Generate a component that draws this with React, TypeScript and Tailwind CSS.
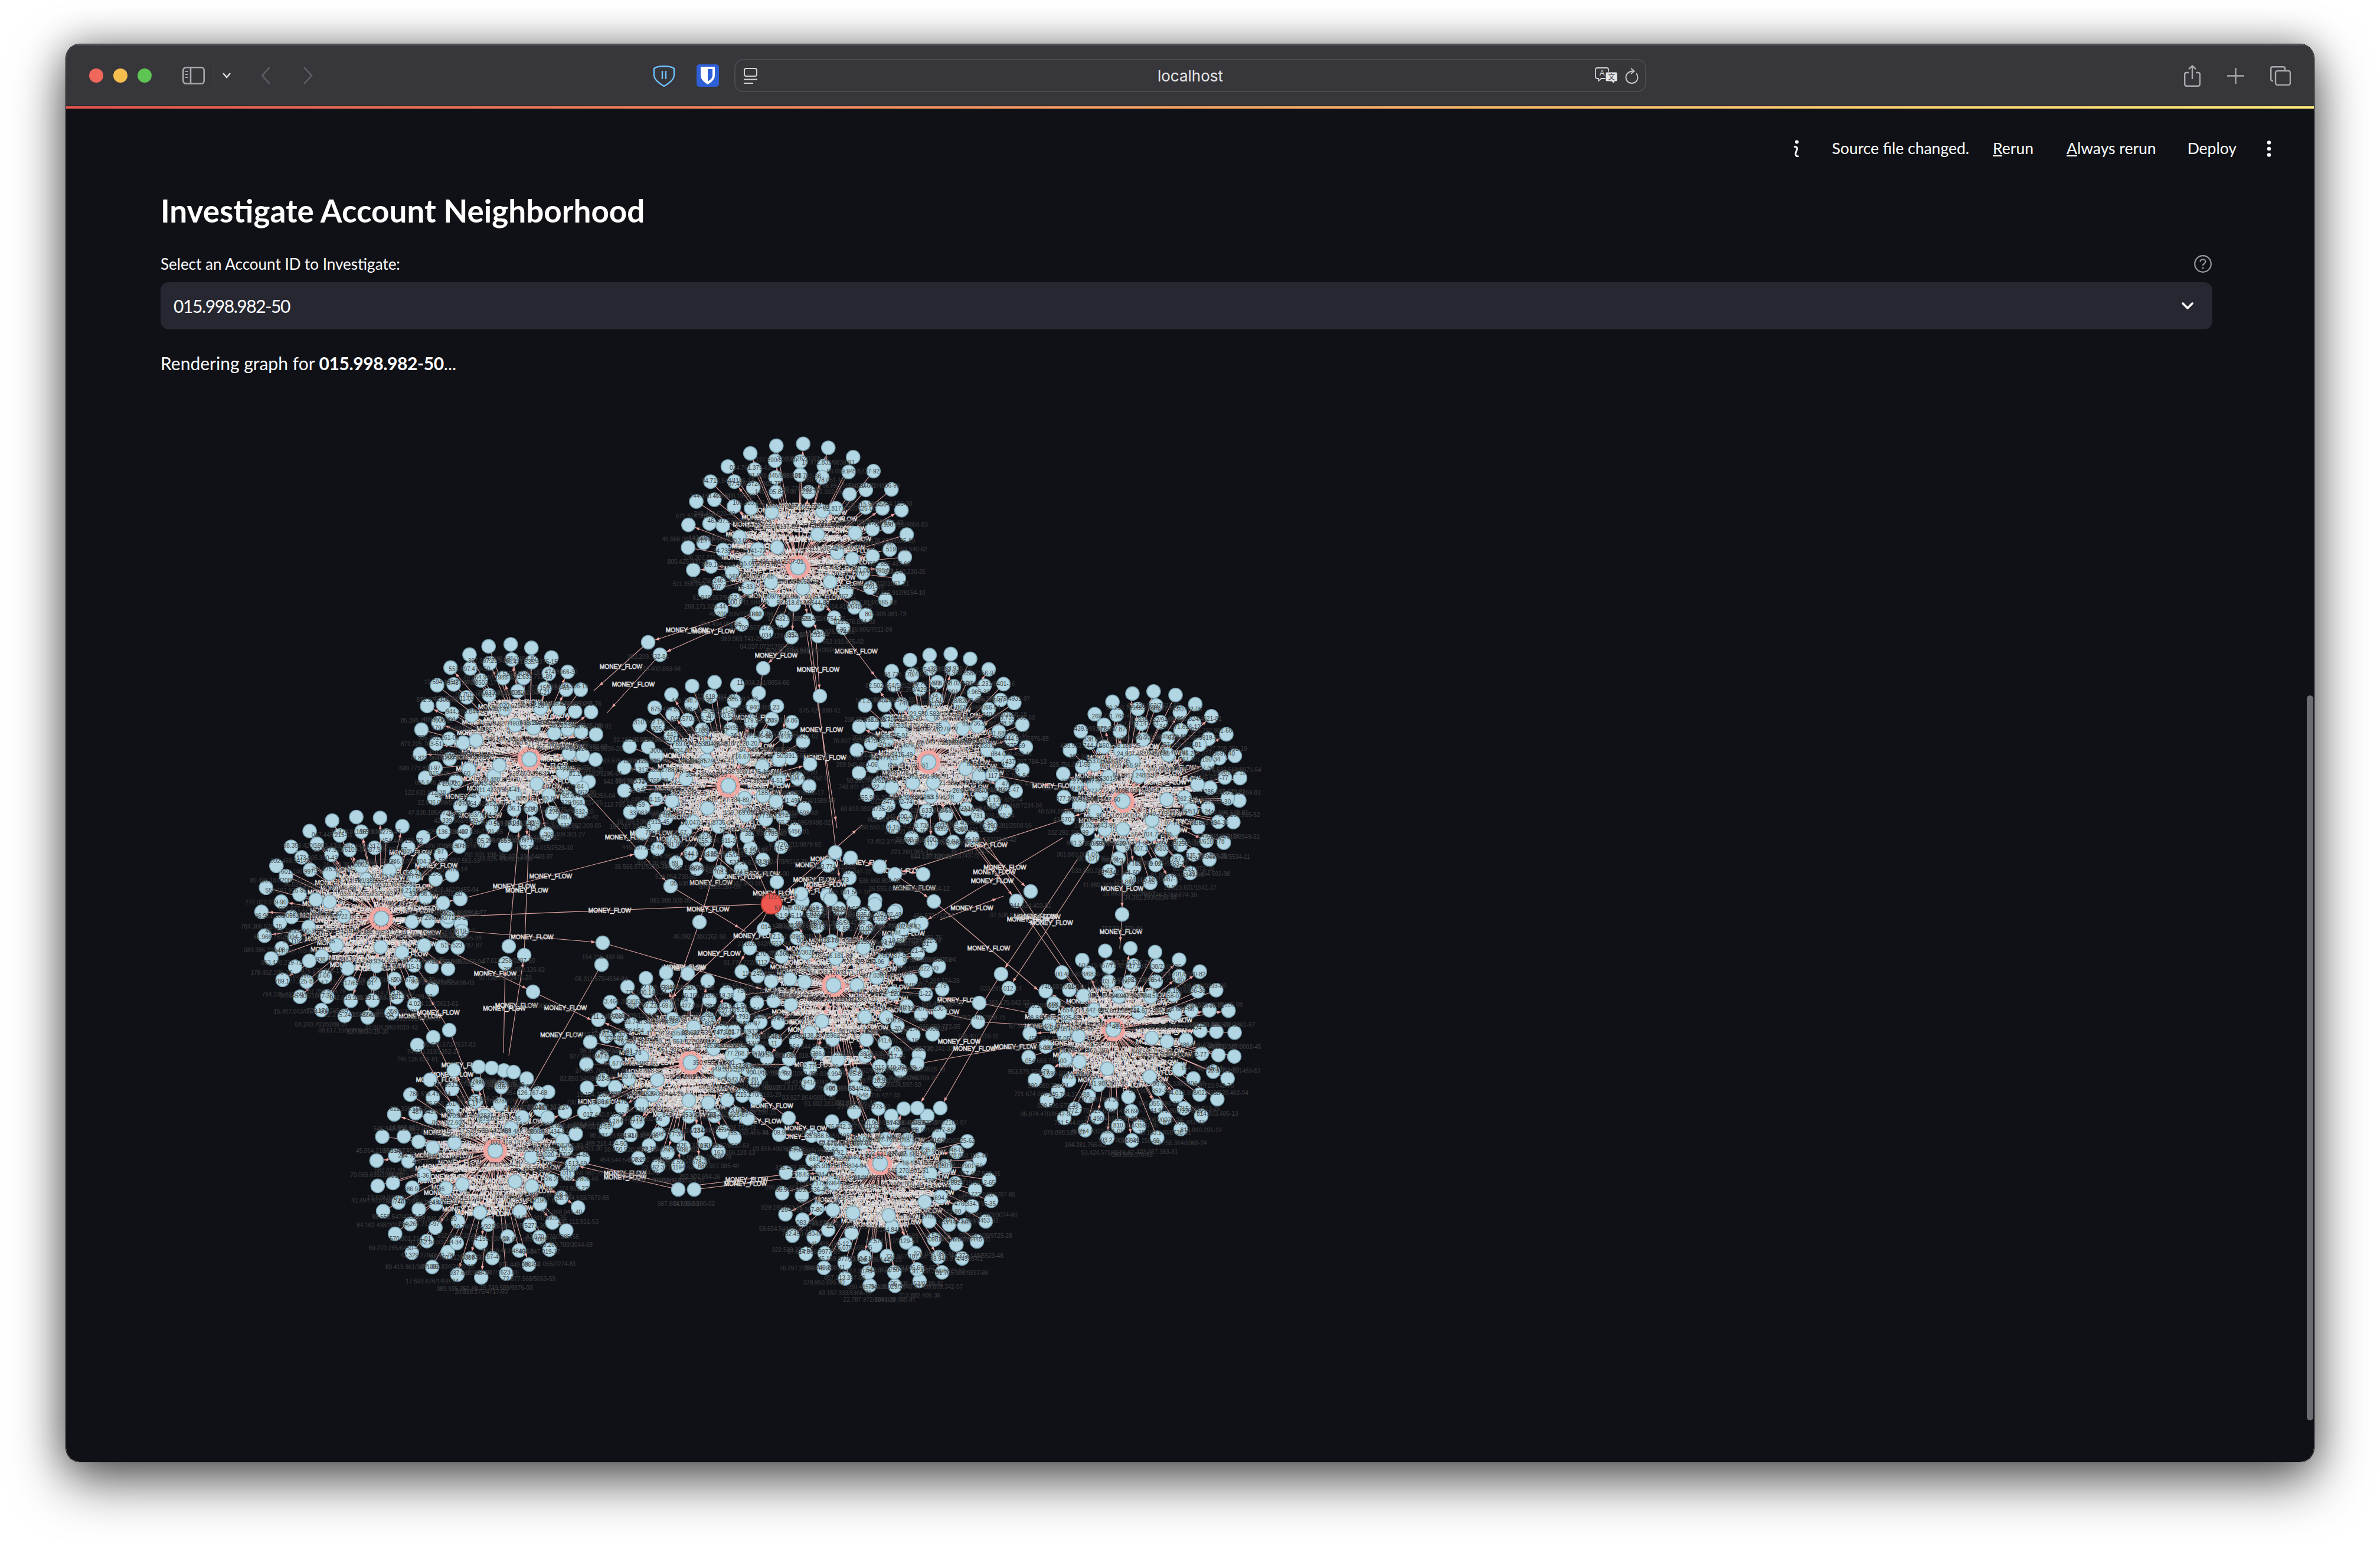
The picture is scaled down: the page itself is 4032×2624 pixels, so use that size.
import React from "react";

// --- graph data ---------------------------------------------------------

type Cluster = { hx: number; hy: number; cx: number; cy: number; rx: number; ry: number };

const clusters: Cluster[] = [
  { hx: 1352, hy: 963, cx: 1351, cy: 918, rx: 186, ry: 163 },
  { hx: 897, hy: 1288, cx: 860, cy: 1263, rx: 149, ry: 169 },
  { hx: 1234, hy: 1333, cx: 1215, cy: 1319, rx: 158, ry: 160 },
  { hx: 1573, hy: 1293, cx: 1594, cy: 1270, rx: 143, ry: 161 },
  { hx: 1902, hy: 1359, cx: 1951, cy: 1335, rx: 150, ry: 162 },
  { hx: 646, hy: 1558, cx: 613, cy: 1556, rx: 169, ry: 171 },
  { hx: 1412, hy: 1671, cx: 1425, cy: 1682, rx: 172, ry: 165 },
  { hx: 1886, hy: 1746, cx: 1917, cy: 1772, rx: 175, ry: 163 },
  { hx: 1170, hy: 1802, cx: 1140, cy: 1814, rx: 147, ry: 164 },
  { hx: 839, hy: 1951, cx: 813, cy: 1988, rx: 176, ry: 178 },
  { hx: 1491, hy: 1973, cx: 1502, cy: 2030, rx: 176, ry: 151 },
];

const rings = [
  { f: 1, n: 26 },
  { f: 0.84, n: 23 },
  { f: 0.68, n: 18 },
  { f: 0.52, n: 11 },
  { f: 0.36, n: 5 },
  { f: 0.2, n: 2 },
];

// nodes that sit between the clusters
const looseNodes: [number, number][] = [
  [1293, 1134], [1389, 1181], [1415, 1446], [1441, 1455], [1403, 1468], [1490, 1470], [1516, 1483], [1564, 1483],
  [1439, 1489], [1316, 1496], [1357, 1516], [1407, 1525], [1446, 1530], [1482, 1534], [1515, 1547], [1349, 1546],
  [1383, 1542], [1582, 1529], [1561, 1566], [1529, 1576], [1746, 1512], [1722, 1528], [1901, 1551], [1576, 1604],
  [1696, 1652], [1709, 1676], [1659, 1701], [1657, 1733], [1554, 1804], [1515, 1804], [1554, 1879], [1593, 1879],
  [1510, 1892], [1432, 1915], [1336, 1896], [1320, 1924], [1394, 1930], [1464, 1853], [1019, 1636], [903, 1682],
  [761, 1747], [734, 1759], [707, 1772], [1149, 2017], [1176, 2017], [990, 1886], [1249, 1806], [1279, 1832],
  [833, 1811], [870, 1818], [912, 1854], [928, 1895], [953, 1934], [969, 1975], [1098, 1090], [1118, 1111],
  [751, 1411], [778, 1436], [780, 1525], [759, 1555], [782, 1579], [1021, 1599], [862, 1605], [888, 1620],
  [856, 1634], [1136, 1503], [1185, 1564], [1086, 1446], [986, 1337], [984, 1376],
];

// long edges: x1, y1, x2, y2 (arrow at the second end)
const looseEdges: number[][] = [
  [1307, 1533, 759, 1555], [780, 1525, 1086, 1446], [782, 1579, 1021, 1599], [1021, 1599, 1300, 1680],
  [1136, 1503, 1263, 1580], [986, 1337, 1136, 1503], [1185, 1564, 1224, 1430], [862, 1605, 880, 1400],
  [888, 1620, 897, 1400], [1230, 1047, 1098, 1090], [1098, 1090, 1006, 1172], [1118, 1111, 1028, 1210],
  [1300, 1030, 1118, 1111], [1366, 1070, 1418, 1405], [1372, 1070, 1423, 1500], [1383, 1090, 1389, 1181],
  [1337, 1090, 1293, 1134], [1293, 1134, 1270, 1300], [1412, 1054, 1489, 1156], [1647, 1430, 1722, 1528],
  [1659, 1430, 1746, 1512], [1653, 1430, 1831, 1687], [1665, 1421, 1843, 1687], [1825, 1383, 1516, 1483],
  [1801, 1421, 1561, 1566], [1854, 1454, 1709, 1676], [1825, 1458, 1696, 1652], [1901, 1462, 1901, 1551],
  [1901, 1551, 1897, 1609], [1582, 1529, 1768, 1687], [1814, 1336, 1756, 1329], [1756, 1329, 1573, 1293],
  [1802, 1374, 1902, 1359], [1696, 1652, 1554, 1879], [1709, 1676, 1593, 1879], [1659, 1701, 1886, 1746],
  [1659, 1701, 1589, 1691], [1657, 1733, 1886, 1746], [1657, 1733, 1521, 1699], [1554, 1804, 1886, 1746],
  [1515, 1804, 1249, 1806], [1249, 1806, 1170, 1802], [1279, 1832, 1170, 1802], [1149, 2017, 969, 1975],
  [1146, 2010, 972, 1968], [1176, 2017, 1350, 1996], [1178, 2010, 1352, 1989], [903, 1682, 1013, 1735],
  [775, 1620, 903, 1682], [1019, 1636, 884, 1873], [707, 1772, 775, 1889], [734, 1759, 689, 1687],
  [734, 1759, 798, 1885], [761, 1747, 724, 1687], [761, 1747, 807, 1865], [853, 1786, 856, 1634],
  [862, 1790, 888, 1620], [1307, 1533, 1316, 1496], [1307, 1533, 1439, 1489], [1307, 1533, 1357, 1516],
  [1307, 1533, 1263, 1430], [1307, 1533, 1200, 1440], [1307, 1533, 1130, 1700], [1307, 1533, 1349, 1546],
  [1307, 1533, 1460, 1400], [1403, 1468, 1357, 1516], [1439, 1489, 1357, 1510], [1490, 1470, 1564, 1483],
  [1516, 1483, 1582, 1529], [1441, 1455, 1490, 1470], [1415, 1446, 1403, 1468], [1335, 1896, 1280, 1853],
  [1320, 1924, 1257, 1877], [1394, 1930, 1336, 1896], [1394, 1930, 1320, 1924], [990, 1886, 839, 1951],
  [990, 1886, 1040, 1850], [751, 1411, 640, 1480], [778, 1436, 700, 1500], [751, 1411, 830, 1290],
  [778, 1436, 850, 1330], [1086, 1446, 1120, 1380], [1086, 1446, 1210, 1400], [1316, 1496, 1329, 1213],
  [1185, 1564, 1130, 1720], [1307, 1533, 1250, 1640], [1593, 1560, 1700, 1520], [1561, 1566, 1500, 1600],
  [969, 1975, 839, 1951], [953, 1934, 839, 1951], [928, 1895, 839, 1951], [1464, 1853, 1412, 1671],
  [1445, 1900, 1420, 1700], [1455, 1900, 1400, 1690], [1470, 1900, 1380, 1690], [1465, 1900, 1395, 1700],
];

// --- seeded generation ---------------------------------------------------

let seed = 20240611;
function rnd() {
  seed = (seed + 0x6d2b79f5) | 0;
  let t = Math.imul(seed ^ (seed >>> 15), 1 | seed);
  t = (t + Math.imul(t ^ (t >>> 7), 61 | t)) ^ t;
  return ((t ^ (t >>> 14)) >>> 0) / 4294967296;
}

function digits(n: number) {
  let s = "";
  for (let i = 0; i < n; i++) s += Math.floor(rnd() * 10);
  return s;
}

function accountId() {
  if (rnd() < 0.55) return `${digits(3)}.${digits(3)}.${digits(3)}-${digits(2)}`;
  return `${digits(2)}.${digits(3)}.${digits(3)}/${digits(4)}-${digits(2)}`;
}

function arrowAt(x: number, y: number, fromX: number, fromY: number, inset: number) {
  const d = Math.hypot(x - fromX, y - fromY) || 1;
  const ux = (x - fromX) / d;
  const uy = (y - fromY) / d;
  const tx = x - ux * inset;
  const ty = y - uy * inset;
  const bx = tx - ux * 7;
  const by = ty - uy * 7;
  return `M${tx.toFixed(1)} ${ty.toFixed(1)}L${(bx - uy * 2.6).toFixed(1)} ${(by + ux * 2.6).toFixed(1)}L${(bx + uy * 2.6).toFixed(1)} ${(by - ux * 2.6).toFixed(1)}Z`;
}

function buildGraph() {
  const nodes: { x: number; y: number; r: number; id: string }[] = [];
  const flowLabels: { x: number; y: number }[] = [];
  let edges = "";
  let arrows = "";
  let hubArrows = "";

  for (const c of clusters) {
    for (const ring of rings) {
      const start = rnd() * Math.PI * 2;
      for (let i = 0; i < ring.n; i++) {
        const a = start + (i / ring.n) * Math.PI * 2;
        const jit = ring.f === 1 ? 3 : 9;
        const x = c.cx + c.rx * ring.f * Math.cos(a) + (rnd() - 0.5) * jit;
        const y = c.cy + c.ry * ring.f * Math.sin(a) + (rnd() - 0.5) * jit;
        if (Math.hypot(x - c.hx, y - c.hy) < 34) continue;
        nodes.push({ x, y, r: 11.5, id: accountId() });
        edges += `M${c.hx} ${c.hy}L${x.toFixed(1)} ${y.toFixed(1)}`;
        flowLabels.push({ x: (c.hx + x) / 2, y: (c.hy + y) / 2 });
        if (rnd() < 0.55) hubArrows += arrowAt(c.hx, c.hy, x, y, 13);
        else arrows += arrowAt(x, y, c.hx, c.hy, 12.5);
      }
    }
    nodes.push({ x: c.hx, y: c.hy, r: 12.5, id: accountId() });
  }

  for (const [x, y] of looseNodes) nodes.push({ x, y, r: 11.5, id: accountId() });

  for (const [x1, y1, x2, y2] of looseEdges) {
    edges += `M${x1} ${y1}L${x2} ${y2}`;
    arrows += arrowAt(x2, y2, x1, y1, 12.5);
    flowLabels.push({ x: (x1 + x2) / 2, y: (y1 + y2) / 2 });
  }

  return { nodes, flowLabels, edges, arrows, hubArrows };
}

const graph = buildGraph();

function NeighborhoodGraph() {
  return (
    <svg width={2000} height={1560} viewBox="272 700 2000 1560" className="mt-[63px] block">
      <path d={graph.edges} stroke="#e0a5a2" strokeWidth={1.1} fill="none" />
      <g fontFamily="'Liberation Sans', Arial, sans-serif" fontSize={10.2} fill="#2a2a2e" stroke="#f4f0f0" strokeWidth={0.65} textAnchor="middle">
        {graph.flowLabels.map((l, i) => (
          <text key={i} x={l.x} y={l.y + 4}>
            MONEY_FLOW
          </text>
        ))}
      </g>
      <path d={graph.arrows} fill="#f2a5a0" />
      <path d={graph.hubArrows} fill="#f2a5a0" />
      <g>
        {graph.nodes.map((n, i) => (
          <circle key={i} cx={n.x} cy={n.y} r={n.r} fill="#b2d6e3" stroke="#7ea6b6" strokeWidth={1.6} />
        ))}
      </g>
      {clusters.map((c, i) => (
        <circle key={i} cx={c.hx} cy={c.hy} r={16} fill="none" stroke="#f2a5a0" strokeWidth={5} strokeDasharray="6 1.2" />
      ))}
      <circle cx={1307} cy={1533} r={17.5} fill="#ee5850" stroke="#b93a32" strokeWidth={2} />
      <g fontFamily="'Liberation Sans', Arial, sans-serif" fontSize={10} fill="#3f3f42" textAnchor="middle">
        {graph.nodes.map((n, i) => (
          <text key={i} x={n.x} y={n.y + 28}>
            {n.id}
          </text>
        ))}
      </g>
    </svg>
  );
}

// --- browser chrome icons ------------------------------------------------

function SidebarIcon() {
  return (
    <svg width="38" height="30" viewBox="0 0 38 30" fill="none" stroke="#a9a9ad" strokeWidth="2.6" className="ml-[52px]">
      <rect x="1.3" y="1.3" width="35.4" height="27.4" rx="5" />
      <path d="M14 1.3V28.7" />
      <path d="M5 8h4M5 13h4M5 18h4" strokeWidth="2" />
    </svg>
  );
}

function ShieldPause() {
  return (
    <svg width="38" height="38" viewBox="0 0 38 38" fill="none" stroke="#6fc1ff" strokeWidth="2.4" className="ml-[576px]">
      <path d="M2 7C8 2 30 2 36 7V18C36 26 26 33 19 37C12 33 2 26 2 18Z" />
      <path d="M16 11V25M22 11V25" />
    </svg>
  );
}

function BitwardenIcon() {
  return (
    <svg width="38" height="38" viewBox="0 0 38 38" className="ml-[36px]">
      <rect width="38" height="38" rx="5" fill="#2e5fd6" />
      <path d="M7 4H31V19C31 26 24 31 19 34C14 31 7 26 7 19Z" fill="#ffffff" />
      <path d="M19 8H27V19C27 24 22 27 19 29Z" fill="#2e5fd6" />
    </svg>
  );
}

function ReaderIcon() {
  return (
    <svg width="23" height="27" viewBox="0 0 23 27" fill="none" stroke="#d2d2d4" strokeWidth="2">
      <rect x="1" y="1" width="21" height="13" rx="3" />
      <path d="M0 19.5H23" />
      <path d="M0 26H16" />
    </svg>
  );
}

function TranslateIcon() {
  return (
    <svg width="39" height="28" viewBox="0 0 39 28">
      <path d="M4 1H20C22 1 23 2 23 4V16C23 18 22 19 20 19H11L6 23V19H4C2 19 1 18 1 16V4C1 2 2 1 4 1Z" fill="#37363b" stroke="#d2d2d4" strokeWidth="1.8" />
      <text x="12" y="14" fontSize="13" fill="#d2d2d4" textAnchor="middle" fontFamily="'Liberation Sans', sans-serif">
        A
      </text>
      <path d="M21 8H35C37 8 38 9 38 11V21C38 23 37 24 35 24H33V28L28 24H21C19 24 18 23 18 21V11C18 9 19 8 21 8Z" fill="#e4e4e6" stroke="#37363b" strokeWidth="1" />
      <text x="28" y="21" fontSize="12" fill="#37363b" textAnchor="middle" fontFamily="'Noto Sans CJK SC', sans-serif">
        文
      </text>
    </svg>
  );
}

function ReloadIcon() {
  return (
    <svg width="23" height="27" viewBox="0 0 23 27" fill="none" stroke="#c9c9cc" strokeWidth="1.9" className="ml-[12px]">
      <path d="M15 5.5C7 5 1.5 10 1.5 16C1.5 22 6 26 11.5 26C17 26 21.5 22 21.5 16C21.5 13.5 20.5 11 19 9.5" />
      <path d="M10 1L15.5 5.5L10 10" />
    </svg>
  );
}

function ShareIcon() {
  return (
    <svg width="28" height="37" viewBox="0 0 28 37" fill="none" stroke="#a9a9ad" strokeWidth="2.4" className="ml-[911px]">
      <path d="M8 13H4C2 13 1.2 14 1.2 16V32C1.2 34.5 2 35.8 4.5 35.8H23.5C26 35.8 26.8 34.5 26.8 32V16C26.8 14 26 13 24 13H20" />
      <path d="M14 24V1.5M8 7L14 1.5L20 7" />
    </svg>
  );
}

function PlusIcon() {
  return (
    <svg width="29" height="27" viewBox="0 0 29 27" fill="none" stroke="#a9a9ad" strokeWidth="2.4" className="ml-[45px]">
      <path d="M14.5 0V27M0 13.5H29" />
    </svg>
  );
}

function TabsIcon() {
  return (
    <svg width="35" height="33" viewBox="0 0 35 33" fill="none" stroke="#a9a9ad" strokeWidth="2.4" className="ml-[44px]">
      <path d="M5 25H4C2 25 1.2 24 1.2 22V4C1.2 2 2 1.2 4 1.2H22C24 1.2 25 2 25 4V7" />
      <rect x="9" y="8" width="25" height="24" rx="3.5" />
    </svg>
  );
}

// --- page ----------------------------------------------------------------

const appFont = { fontFamily: "Lato, 'Noto Sans', sans-serif" };

export default function App() {
  return (
    <div className="w-[4032px] h-[2624px] bg-white pt-[74px] pl-[111px] overflow-hidden">
      <div className="flex flex-col w-[3810px] h-[2403px] rounded-[24px] border border-black overflow-hidden shadow-[0_32px_90px_rgba(0,0,0,0.62),0_0_60px_rgba(0,0,0,0.3)]">
        {/* safari toolbar */}
        <div className="flex items-center shrink-0 h-[105px] bg-[#37363b] border-t-2 border-[#5b5a5f] border-b border-b-black">
          <span className="ml-[39px] w-[24px] h-[24px] rounded-full bg-[#f0675c]" />
          <span className="ml-[17px] w-[24px] h-[24px] rounded-full bg-[#f6be4f]" />
          <span className="ml-[17px] w-[24px] h-[24px] rounded-full bg-[#5ec453]" />
          <SidebarIcon />
          <span className="ml-[15px] w-[1px] h-[36px] bg-[#4d4c51]" />
          <svg width="14" height="10" viewBox="0 0 14 10" fill="none" stroke="#d8d8da" strokeWidth="2.6" className="ml-[14px]">
            <path d="M1 1L7 8L13 1" />
          </svg>
          <svg width="16" height="30" viewBox="0 0 16 30" fill="none" stroke="#5c5b60" strokeWidth="2.8" className="ml-[51px]">
            <path d="M15 1L2 15L15 29" />
          </svg>
          <svg width="16" height="30" viewBox="0 0 16 30" fill="none" stroke="#5c5b60" strokeWidth="2.8" className="ml-[56px]">
            <path d="M1 1L14 15L1 29" />
          </svg>
          <ShieldPause />
          <BitwardenIcon />
          <div className="ml-[26px] flex items-center w-[1545px] h-[56px] pl-[14px] pr-[11px] rounded-[15px] border-2 border-[#4a494e]">
            <ReaderIcon />
            <span className="flex-1 pl-[48px] text-center text-[26px] text-[#e6e6e8] font-['Inter',sans-serif]">localhost</span>
            <TranslateIcon />
            <ReloadIcon />
          </div>
          <ShareIcon />
          <PlusIcon />
          <TabsIcon />
        </div>
        <div className="shrink-0 h-[4px] bg-gradient-to-r from-[#e2554f] to-[#fdeb7b]" />

        {/* streamlit page */}
        <div className="relative flex-1 bg-[#0f1116] text-white overflow-hidden" style={appFont}>
          <div className="mt-[34px] h-[68px] flex items-center justify-end pr-[72px] text-[26.5px]">
            <svg width="12" height="30" viewBox="0 0 12 30" fill="none" stroke="#ffffff" strokeWidth="2.8">
              <circle cx="7" cy="3.5" r="3" fill="#ffffff" stroke="none" />
              <path d="M2 12C6 11 9 13 7 17C5 21 4 25 6 27C7 28 9 28 10 27" />
            </svg>
            <span className="ml-[54px]">Source file changed.</span>
            <span className="ml-[40px]">
              <span className="underline">R</span>erun
            </span>
            <span className="ml-[56px]">
              <span className="underline">A</span>lways rerun
            </span>
            <span className="ml-[53px]">Deploy</span>
            <svg width="8" height="28" viewBox="0 0 8 28" fill="#ffffff" className="ml-[51px]">
              <circle cx="4" cy="3.5" r="3.2" />
              <circle cx="4" cy="14" r="3.2" />
              <circle cx="4" cy="24.5" r="3.2" />
            </svg>
          </div>

          <div className="pl-[160px] w-[3636px]">
            <h1 className="mt-[36px] h-[70px] leading-[70px] text-[53px] font-bold">Investigate Account Neighborhood</h1>
            <div className="mt-[35px] h-[40px] flex items-center justify-between pr-[1px] text-[26px]">
              <span>Select an Account ID to Investigate:</span>
              <svg width="30" height="30" viewBox="0 0 30 30" fill="none" stroke="#9a9a9c" strokeWidth="2.2">
                <circle cx="15" cy="15" r="13.8" />
                <path d="M10.5 11.5C10.5 9 12.5 7.5 15 7.5C17.5 7.5 19.5 9 19.5 11.3C19.5 14.5 15 14.5 15 17.8" />
                <circle cx="15" cy="22" r="1.5" fill="#9a9a9c" stroke="none" />
              </svg>
            </div>
            <div className="mt-[11px] h-[80px] flex items-center justify-between pl-[22px] pr-[32px] rounded-[14px] bg-[#262730] text-[30px]">
              <span className="tracking-[-1.4px]">015.998.982-50</span>
              <svg width="20" height="12" viewBox="0 0 20 12" fill="none" stroke="#ffffff" strokeWidth="3.6" strokeLinecap="round">
                <path d="M2 2L10 10L18 2" />
              </svg>
            </div>
            <p className="mt-[37px] h-[40px] leading-[40px] text-[30px]">
              Rendering graph for <strong className="font-bold tracking-[-0.4px]">015.998.982-50</strong>...
            </p>
            <NeighborhoodGraph />
          </div>

          {/* overlay scrollbar */}
          <div className="absolute right-[1px] top-[994px] w-[11px] h-[1228px] rounded-full bg-[#6b6d72]" />
        </div>
      </div>
    </div>
  );
}
